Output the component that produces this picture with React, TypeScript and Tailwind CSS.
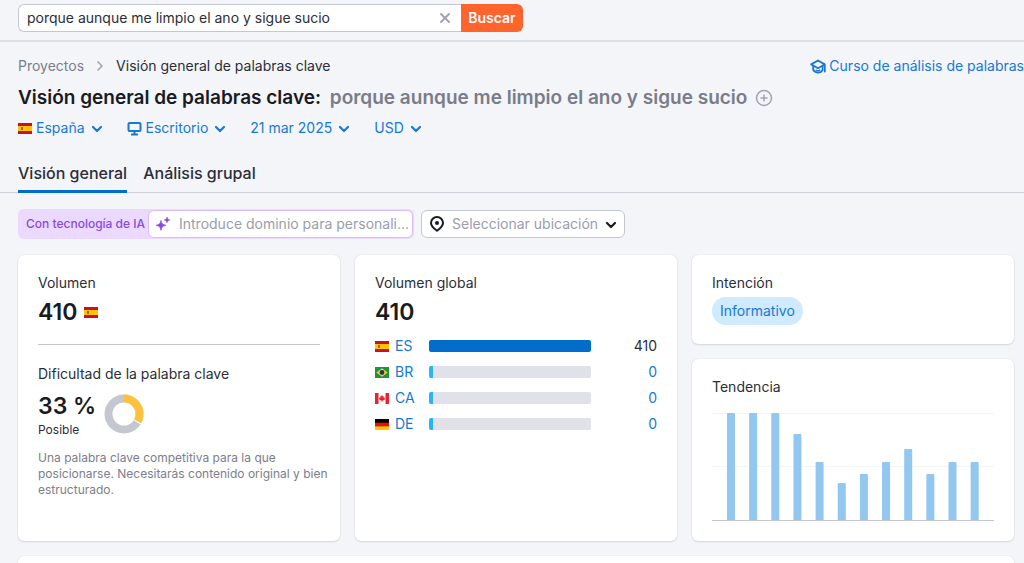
import React, { useState } from 'react'
import { ChevronRight, X, CirclePlus } from 'lucide-react'

type Country = 'ES' | 'BR' | 'CA' | 'DE'

const filters = [
  { id: 'country', label: 'España' },
  { id: 'device', label: 'Escritorio' },
  { id: 'date', label: '21 mar 2025' },
  { id: 'currency', label: 'USD' },
]

const tabs = ['Visión general', 'Análisis grupal']

const volumes: { code: Country; value: number }[] = [
  { code: 'ES', value: 410 },
  { code: 'BR', value: 0 },
  { code: 'CA', value: 0 },
  { code: 'DE', value: 0 },
]

const trend = [107, 107, 107, 86, 58, 37, 46, 58, 71, 46, 58, 58]

const Flag: React.FC<{ code: Country }> = ({ code }) => (
  <svg viewBox="0 0 14 11" className="w-[14px] h-[11px] shrink-0" aria-hidden="true">
    {code === 'ES' && (
      <>
        <rect width="14" height="11" fill="#c8102e" />
        <rect y="3" width="14" height="5" fill="#ffc400" />
        <rect x="3" y="4" width="2" height="3" fill="#b5541c" />
      </>
    )}
    {code === 'BR' && (
      <>
        <rect width="14" height="11" fill="#1c9440" />
        <path d="M7 1.3 12.6 5.5 7 9.7 1.4 5.5Z" fill="#f5d028" />
        <circle cx="7" cy="5.5" r="2.4" fill="#25336f" />
      </>
    )}
    {code === 'CA' && (
      <>
        <rect width="14" height="11" fill="#fff" />
        <rect width="3.5" height="11" fill="#e8222e" />
        <rect x="10.5" width="3.5" height="11" fill="#e8222e" />
        <path d="M7 2l.8 1.3.8-.3-.1 1.600 1.600.2-.4 1 .4.5-2 1.200-.8.3V9h-.6V7.800l-.8-.3-2-1.200.4-.5-.4-1 1.600-.2-.1-1.600.8.3Z" fill="#e8222e" />
      </>
    )}
    {code === 'DE' && (
      <>
        <rect width="14" height="11" fill="#ffc800" />
        <rect width="14" height="7.4" fill="#e1140a" />
        <rect width="14" height="3.7" fill="#000" />
      </>
    )}
  </svg>
)

const Chevron = () => (
  <svg viewBox="0 0 12 8" className="w-3 h-2 mt-px shrink-0" fill="none" stroke="currentColor" strokeWidth="2.2" strokeLinecap="round" strokeLinejoin="round" aria-hidden="true">
    <path d="M2 2l4 4 4-4" />
  </svg>
)

const Monitor = () => (
  <svg viewBox="0 0 15 15" className="w-[15px] h-[15px] shrink-0" fill="none" stroke="currentColor" strokeWidth="2" aria-hidden="true">
    <rect x="1.5" y="2" width="12" height="8" rx="1" />
    <path d="M7.5 10v3M4 13.5h7" />
  </svg>
)

const Hat = () => (
  <svg viewBox="0 0 16 15" className="w-4 h-[15px] shrink-0" fill="none" stroke="currentColor" strokeWidth="1.8" strokeLinejoin="round" strokeLinecap="round" aria-hidden="true">
    <path d="M14.800 12.500V5.400L8 1.500 1.200 5.400 8 9.200l6.500-3.700" />
    <path d="M3.200 7.200v3.600c2 3.600 7.600 3.600 9.400 0V7.200" />
    <path d="M6 11c1.200.8 2.800.8 4 0" strokeWidth="1.200" />
  </svg>
)

const Sparkles = () => (
  <svg viewBox="0 0 16 16" className="w-4 h-4 shrink-0 text-[#8649e1]" fill="currentColor" aria-hidden="true">
    <path d="M6 4.5c.6 3.1 1.4 3.9 4.7 4.8C7.4 10.2 6.6 11 6 14.3 5.4 11 4.6 10.2 1.3 9.3 4.6 8.4 5.4 7.6 6 4.5Z" stroke="currentColor" strokeWidth=".8" strokeLinejoin="round" />
    <path d="M12 1c.3 1.800.9 2.400 2.800 2.900C12.900 4.400 12.300 5 12 6.800 11.700 5 11.100 4.400 9.200 3.900 11.100 3.400 11.700 2.800 12 1Z" stroke="currentColor" strokeWidth=".6" strokeLinejoin="round" />
  </svg>
)

const Pin = () => (
  <svg viewBox="0 0 16 16" className="w-4 h-4 shrink-0" fill="none" stroke="currentColor" strokeWidth="2" strokeLinejoin="round" aria-hidden="true">
    <path d="M8 14.8C4.5 12.3 2 10.3 2 7a6 6 0 0 1 12 0c0 3.3-2.5 5.3-6 7.8Z" />
    <circle cx="8" cy="7" r="2" fill="currentColor" stroke="none" />
  </svg>
)

// Ring filled clockwise from the top
const Donut: React.FC<{ percent: number }> = ({ percent }) => (
  <svg viewBox="0 0 40 40" className="w-10 h-10 shrink-0" fill="none" strokeWidth="8" aria-hidden="true">
    <circle cx="20" cy="20" r="15.5" stroke="#c4c7cf" />
    <circle cx="20" cy="20" r="15.5" stroke="#fff" pathLength="100" strokeDasharray={`${percent + 1} 100`} transform="rotate(-90 20 20)" />
    <circle cx="20" cy="20" r="15.5" stroke="#fdc23c" pathLength="100" strokeDasharray={`${percent} 100`} transform="rotate(-90 20 20)" />
  </svg>
)

const TrendChart = () => (
  <svg viewBox="0 0 282 108" className="w-full h-auto" role="img" aria-label="Tendencia">
    <path d="M0 .5h282M0 53.5h282" stroke="#f4f5f9" />
    {trend.map((h, i) => (
      <path key={i} d={`M${15 + i * 22.15} 107v-${h - 1}q0-1 1-1h6q1 0 1 1v${h - 1}z`} fill="#92c7ef" />
    ))}
    <path d="M0 107.5h282" stroke="#c4c7cf" />
  </svg>
)

const Card: React.FC<{ className?: string; children?: React.ReactNode }> = ({ className = '', children }) => (
  <section className={`bg-white rounded-md shadow-[0_0_1px_rgba(25,27,35,0.16),0_1px_2px_rgba(25,27,35,0.12)] ${className}`}>
    {children}
  </section>
)

export default function App() {
  const [query, setQuery] = useState('porque aunque me limpio el ano y sigue sucio')
  const [activeTab, setActiveTab] = useState(tabs[0])

  return (
    <div className="h-screen overflow-hidden bg-[#f4f5f9] font-['Inter',sans-serif] text-sm leading-5 text-[#2b2e38]">
      <header className="border-b-2 border-[#dfe0e7] pl-[18px] pt-1 pb-2">
        <form className="flex h-7 w-[505px] max-w-full" onSubmit={(e) => e.preventDefault()}>
          <div className="flex min-w-0 flex-1 items-center rounded-l-md border border-r-0 border-[#c4c7cf] bg-white px-2">
            <input
              aria-label="Palabra clave"
              value={query}
              onChange={(e) => setQuery(e.target.value)}
              className="min-w-0 flex-1 bg-transparent outline-none"
            />
            <button type="button" aria-label="Borrar" onClick={() => setQuery('')} className="text-[#a1a4b0]">
              <X className="h-4 w-4" strokeWidth={3} />
            </button>
          </div>
          <button type="submit" className="w-[62px] rounded-r-md bg-[#ff642d] text-center font-semibold text-white">
            Buscar
          </button>
        </form>
      </header>

      <div className="pl-[18px] pt-[14px]">
        <div className="flex items-center justify-between">
          <nav className="flex items-center gap-2">
            <a href="#" className="text-[#7b7e8b]">Proyectos</a>
            <ChevronRight className="h-4 w-4 text-[#a1a4b0]" strokeWidth={2.5} />
            <span>Visión general de palabras clave</span>
          </nav>
          <a href="#" className="flex shrink-0 items-center gap-[3px] whitespace-nowrap text-[#1779d4]">
            <Hat />
            Curso de análisis de palabras
          </a>
        </div>

        <div className="mt-2 flex items-center gap-2 text-[19px] leading-7 font-semibold">
          <h1 className="text-[#191b23]">
            Visión general de palabras clave: <span className="ml-1 text-[#7a7c89]">porque aunque me limpio el ano y sigue sucio</span>
          </h1>
          <button type="button" aria-label="Añadir" className="text-[#a1a4b0]">
            <CirclePlus className="h-[18px] w-[18px]" />
          </button>
        </div>

        <div className="mt-[6px] flex gap-6 text-[#1779d4]">
          {filters.map((filter) => (
            <button key={filter.id} type="button" className="flex items-center gap-[6px]">
              <span className="flex items-center gap-1">
                {filter.id === 'country' && <Flag code="ES" />}
                {filter.id === 'device' && <Monitor />}
                {filter.label}
              </span>
              <Chevron />
            </button>
          ))}
        </div>
      </div>

      <div className="mt-[14px] flex gap-4 border-b border-[#cfd1da] pl-[18px]">
        {tabs.map((tab) => (
          <button
            key={tab}
            type="button"
            onClick={() => setActiveTab(tab)}
            className={`-mb-px h-[41px] border-b-[3px] pt-[3px] text-base font-medium ${activeTab === tab ? 'border-[#006dca]' : 'border-transparent'}`}
          >
            {tab}
          </button>
        ))}
      </div>

      <div className="mt-4 flex items-center gap-[7px] pl-[18px]">
        <div className="flex h-[30px] w-[396px] items-center rounded-md bg-[#ecd9ff] p-px">
          <label htmlFor="domain" className="w-[129px] shrink-0 whitespace-nowrap pl-[7px] text-xs font-medium text-[#8649e1]">
            Con tecnología de IA
          </label>
          <div className="flex h-7 min-w-0 flex-1 items-center gap-2 rounded-md border border-[#dcbcff] bg-white pl-[6px] pr-1">
            <Sparkles />
            <input
              id="domain"
              placeholder="Introduce dominio para personali..."
              className="min-w-0 flex-1 bg-transparent outline-none placeholder:text-[#9a9dab]"
            />
          </div>
        </div>
        <button type="button" className="flex h-7 items-center gap-[7px] rounded-md border border-[#c4c7cf] bg-white px-[7px] text-[#191b23]">
          <Pin />
          <span className="text-[#9a9dab]">Seleccionar ubicación</span>
          <Chevron />
        </button>
      </div>

      <main className="mt-4 grid grid-cols-3 gap-[15px] pl-[18px] pr-[10px]">
        <Card className="p-5">
          <h2 className="mt-[-2px]">Volumen</h2>
          <div className="mt-[5px] flex items-center gap-[6px] text-[23px] leading-7 font-semibold text-[#191b23]">
            410 <Flag code="ES" />
          </div>
          <hr className="mt-[18px] border-[#c4c7cf]" />
          <h2 className="mt-[19px]">Dificultad de la palabra clave</h2>
          <div className="mt-[6px] flex items-center gap-2">
            <div>
              <div className="text-[23px] leading-8 font-semibold text-[#191b23]">33 %</div>
              <div className="text-xs">Posible</div>
            </div>
            <Donut percent={33} />
          </div>
          <p className="-mr-3 mt-3 text-xs text-[#7b7e8b]">
            Una palabra clave competitiva para la que <br />
            posicionarse. Necesitarás contenido original y bien estructurado.
          </p>
        </Card>

        <Card className="p-5">
          <h2 className="mt-[-2px]">Volumen global</h2>
          <div className="mt-[5px] text-[23px] leading-7 font-semibold text-[#191b23]">410</div>
          <table className="mt-[7px] w-full">
            <tbody>
              {volumes.map(({ code, value }) => (
                <tr key={code} className="h-[26px]">
                  <th scope="row" className="w-[54px] p-0 font-normal">
                    <a href="#" className="flex items-center gap-[6px] text-[#1779d4]">
                      <Flag code={code} />
                      {code}
                    </a>
                  </th>
                  <td className="p-0">
                    <div className="h-3 overflow-hidden rounded-xs bg-[#e0e1e9]">
                      <div
                        className={`h-full min-w-1 ${value > 0 ? 'bg-[#006dca]' : 'bg-[#2bb3ff]'}`}
                        style={{ width: `${(value / 410) * 100}%` }}
                      />
                    </div>
                  </td>
                  <td className={`w-[66px] p-0 text-right ${value > 0 ? '' : 'text-[#1779d4]'}`}>{value}</td>
                </tr>
              ))}
            </tbody>
          </table>
        </Card>

        <div className="flex flex-col gap-[15px]">
          <Card className="px-5 pt-5 pb-[19px]">
            <h2 className="mt-[-2px]">Intención</h2>
            <a href="#" className="mt-1 flex h-7 w-fit items-center rounded-full bg-[#d0eaff] px-2 text-[#1779d4]">
              Informativo
            </a>
          </Card>
          <Card className="flex-1 p-5">
            <h2 className="mt-[-2px] mb-4">Tendencia</h2>
            <TrendChart />
          </Card>
        </div>

        <Card className="col-span-3 h-10" />
      </main>
    </div>
  )
}
